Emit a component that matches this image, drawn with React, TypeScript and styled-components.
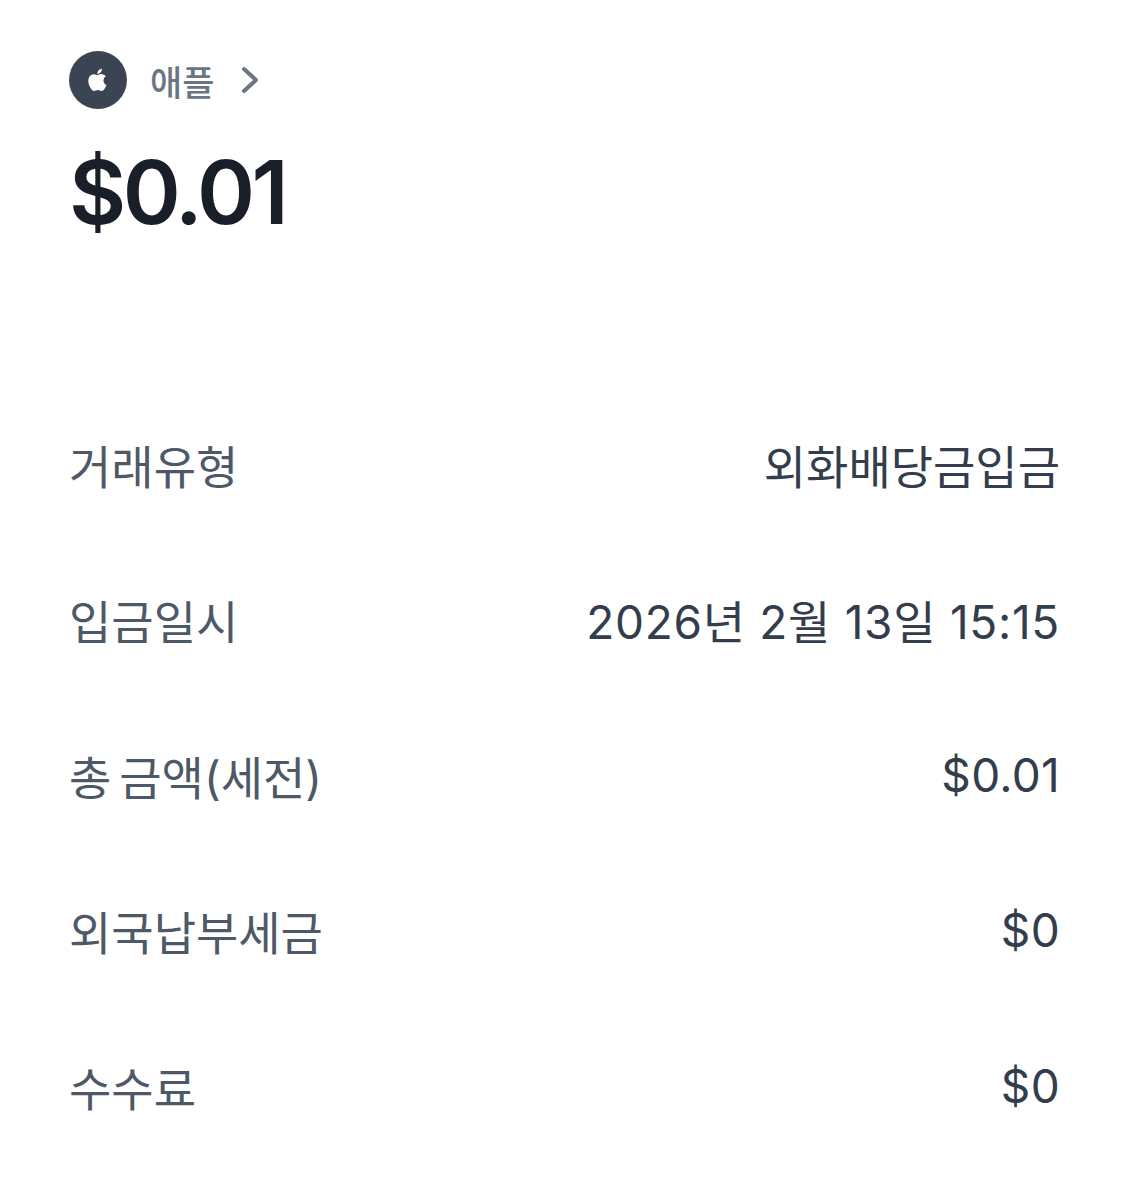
import React from "react";
import styled, { createGlobalStyle } from "styled-components";

const GlobalStyle = createGlobalStyle`
  html, body {
    margin: 0;
    padding: 0;
    background: #ffffff;
  }
`;

const Page = styled.div`
  width: 1131px;
  height: 1200px;
  box-sizing: border-box;
  padding: 51px 71px 0 69px;
  overflow: hidden;
  font-family: Inter, "Noto Sans CJK KR", sans-serif;
`;

const Brand = styled.div`
  display: flex;
  align-items: center;
  height: 58px;
`;

const LogoCircle = styled.div`
  width: 58px;
  height: 58px;
  border-radius: 50%;
  background: #3b4452;
  display: flex;
  align-items: center;
  justify-content: center;
`;

const BrandName = styled.span`
  margin-left: 23px;
  font-size: 35px;
  font-weight: 500;
  color: #6b7684;
`;

const Chevron = styled.svg`
  margin-left: 25px;
  width: 24px;
  height: 30px;
`;

const Amount = styled.div`
  margin-top: 30px;
  font-size: 88px;
  line-height: 106px;
  font-weight: 600;
  letter-spacing: -3.5px;
  color: #191f28;
`;

const Rows = styled.div`
  margin-top: 141px;
  display: flex;
  flex-direction: column;
`;

const Row = styled.div`
  display: flex;
  justify-content: space-between;
  align-items: center;
  height: 155.5px;
  font-size: 46px;
`;

const Label = styled.span`
  color: #4e5968;
  word-spacing: -5px;
`;

const Value = styled.span<{ $tracking: number }>`
  color: #333d4b;
  letter-spacing: ${(p) => p.$tracking}px;
`;

const rows = [
  { label: "거래유형", value: "외화배당금입금", tracking: 0 },
  { label: "입금일시", value: "2026년 2월 13일 15:15", tracking: 0.7 },
  { label: "총 금액(세전)", value: "$0.01", tracking: 0.3 },
  { label: "외국납부세금", value: "$0", tracking: 0.3 },
  { label: "수수료", value: "$0", tracking: 0.3 },
];

const App = () => {
  return (
    <Page>
      <GlobalStyle />
      <Brand>
        <LogoCircle>
          <svg width="26" height="30" viewBox="0 0 24 24" fill="#ffffff">
            <path d="M17.05 12.54c-.03-2.6 2.12-3.85 2.22-3.91-1.21-1.77-3.09-2.01-3.76-2.04-1.6-.16-3.12.94-3.93.94-.81 0-2.06-.92-3.39-.89-1.74.03-3.35 1.01-4.25 2.57-1.81 3.14-.46 7.8 1.3 10.35.86 1.25 1.89 2.65 3.24 2.6 1.3-.05 1.79-.84 3.36-.84s2.01.84 3.39.81c1.4-.02 2.29-1.27 3.14-2.53.99-1.45 1.4-2.86 1.42-2.93-.03-.01-2.72-1.04-2.74-4.13zM14.47 4.9c.72-.87 1.2-2.08 1.07-3.29-1.03.04-2.28.69-3.02 1.55-.66.77-1.24 2-1.09 3.18 1.15.09 2.32-.58 3.04-1.44z" />
          </svg>
        </LogoCircle>
        <BrandName>애플</BrandName>
        <Chevron viewBox="0 0 24 30" fill="none">
          <path d="M5 4l12 11L5 26" stroke="#6b7684" strokeWidth="4" strokeLinecap="round" strokeLinejoin="round" />
        </Chevron>
      </Brand>
      <Amount>$0.01</Amount>
      <Rows>
        {rows.map((row) => (
          <Row key={row.label}>
            <Label>{row.label}</Label>
            <Value $tracking={row.tracking}>{row.value}</Value>
          </Row>
        ))}
      </Rows>
    </Page>
  );
};

export default App;
